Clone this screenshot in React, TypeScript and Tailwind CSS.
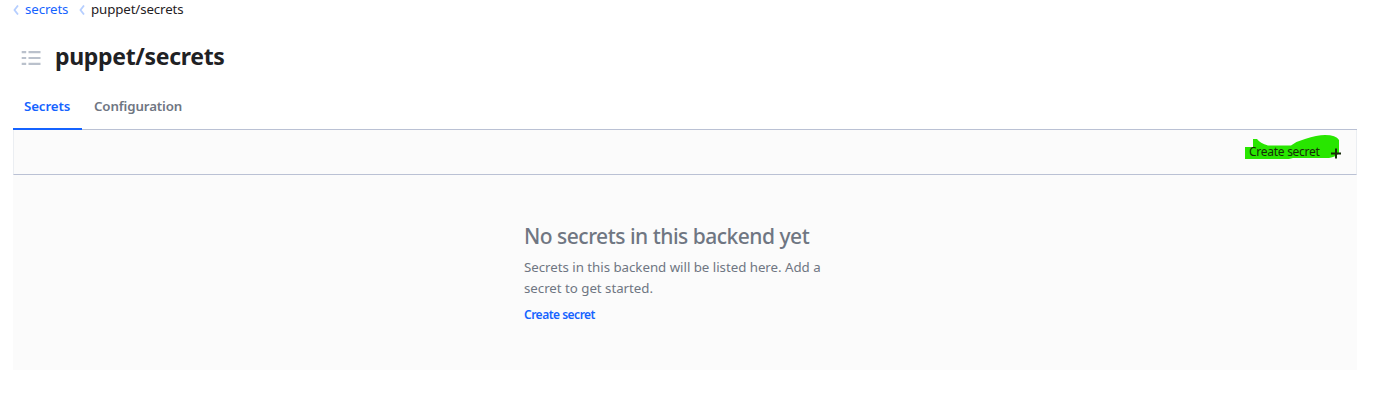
import React from "react";

function Chevron() {
  return (
    <svg width="6" height="10" viewBox="0 0 6 10" fill="none" stroke="#b5ceff" strokeWidth="1.8" className="shrink-0">
      <path d="M5 0.5L1.5 5L5 9.5" />
    </svg>
  );
}

function Breadcrumbs() {
  return (
    <nav className="-mt-px flex h-[21px] items-center text-[13.3px] leading-5 tracking-[-0.12px]">
      <Chevron />
      <a className="ml-1.5 w-[54px] whitespace-nowrap pb-px text-[#1563ff]">secrets</a>
      <Chevron />
      <span className="ml-1.5 whitespace-nowrap pb-px text-[#1f2124]">puppet/secrets</span>
    </nav>
  );
}

function ListIcon() {
  return (
    <svg width="20" height="16" viewBox="0 0 20 16" fill="#bac1cc" className="mt-1 shrink-0">
      <path d="M0.7 1h4.5v2.2H0.7zM7.5 1h12v2.2H7.5zM0.7 6.9h4.5v2.2H0.7zM7.5 6.9h12v2.2H7.5zM0.7 12.8h4.5v2.2H0.7zM7.5 12.8h12v2.2H7.5z" />
    </svg>
  );
}

function Toolbar() {
  return (
    <div className="flex h-[45px] justify-end border-x border-b border-x-[#ebeef2] border-b-[#bac1d4] bg-[#fbfbfb]">
      <button className="relative mr-[15px] flex w-24 items-center text-left text-[12px] leading-5 tracking-[-0.27px] text-[#172b09]">
        <svg className="absolute left-0 top-0" width="96" height="44" viewBox="0 0 96 44" fill="#28e600">
          <path d="M0 17H8V9H12Q15 13 23 15.5H46Q52 11 60 9Q72 5 80 5Q91 5 94 10V23Q91 27 84 28H48L44 29H0Z" />
        </svg>
        <span className="relative ml-[4px] w-[82px] whitespace-nowrap">Create secret</span>
        <svg className="relative mt-0.5 shrink-0" width="10" height="11" viewBox="0 0 10 11" fill="none" stroke="#172b09" strokeWidth="2">
          <path d="M5 0.5V10.5M0 5.5H10" />
        </svg>
      </button>
    </div>
  );
}

export default function App() {
  return (
    <main className="flow-root h-[418px] overflow-hidden bg-white pl-[13px] pr-[22px] font-['Noto_Sans','Open_Sans',sans-serif]">
      <Breadcrumbs />
      <header className="flex h-[72px] items-center pl-2">
        <ListIcon />
        <h1 className="ml-3.5 whitespace-nowrap text-[23px] font-bold leading-8 tracking-[-0.32px] text-[#1f2124]">puppet/secrets</h1>
      </header>
      <div className="flex h-[38px] border-b border-[#bac1d4] text-[13.3px] font-semibold leading-7 tracking-[-0.13px]">
        <a className="h-[38px] w-[69px] whitespace-nowrap border-b-2 border-[#1563ff] pl-[11px] text-[#1563ff]">Secrets</a>
        <a className="ml-3 whitespace-nowrap text-[#6f7682]">Configuration</a>
      </div>
      <Toolbar />
      <section className="flex h-[195px] flex-col bg-[#fbfbfb] pl-[511px] pt-[45px]">
        <h2 className="whitespace-nowrap text-[21px] font-medium leading-8 tracking-[-0.5px] text-[#6f7682]">No secrets in this backend yet</h2>
        <p className="mt-[5px] whitespace-nowrap text-[13.3px] leading-[21px] tracking-[-0.03px] text-[#6f7682]">
          Secrets in this backend will be listed here. Add a<br />secret to get started.
        </p>
        <a className="mt-1.5 whitespace-nowrap text-[12px] font-semibold leading-5 tracking-[-0.5px] text-[#1563ff]">Create secret</a>
      </section>
    </main>
  );
}
